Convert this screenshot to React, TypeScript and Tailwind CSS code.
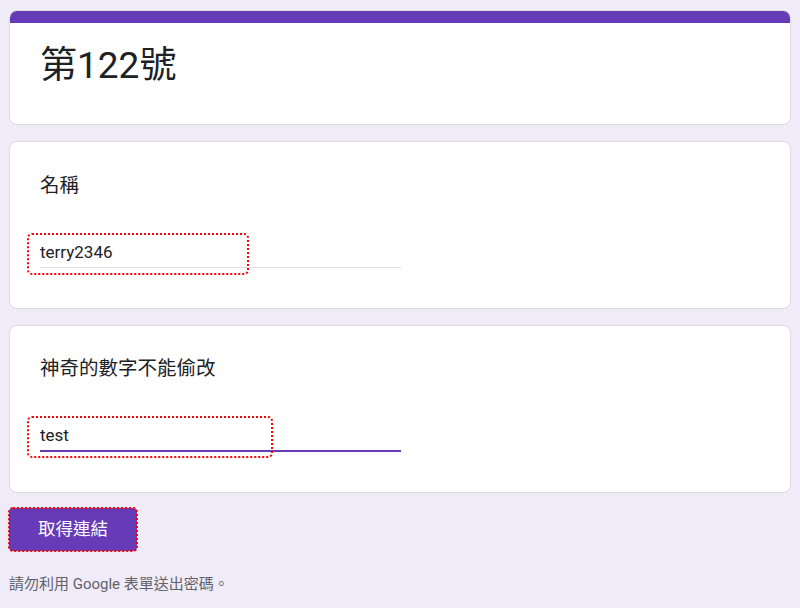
import React from "react";

const cjk = "font-['Roboto','Noto_Sans_CJK_TC',sans-serif]";

function Question({
  label,
  value,
  focused,
  ringWidth,
}: {
  label: string;
  value: string;
  focused?: boolean;
  ringWidth: number;
}) {
  return (
    <div
      className={`bg-white border border-[#dadce0] rounded-lg pl-[30px] pb-[40px] ${
        focused ? "pt-[31px]" : "pt-[32px]"
      }`}
    >
      <div className="text-[19.5px] leading-6 text-[#202124]">{label}</div>
      <div className="relative mt-[42px] w-[361px]">
        <div
          className={`text-[17px] leading-6 text-[#202124] pb-[3px] ${
            focused ? "border-b-2 border-[#673ab7]" : "border-b border-[#e0e0e0]"
          }`}
        >
          {value}
        </div>
        <div
          className="absolute -left-[13px] -top-[7px] h-[42px] border-2 border-dotted border-[#ff0000] rounded-[5px]"
          style={{ width: ringWidth }}
        />
      </div>
    </div>
  );
}

export default function App() {
  return (
    <div className={`min-h-[608px] bg-[#f0ebf8] px-[9px] pt-[10px] ${cjk}`}>
      <div className="flex flex-col gap-4">
        <div className="bg-white border border-[#dadce0] rounded-lg overflow-hidden">
          <div className="h-[12px] bg-[#673ab7]" />
          <div className="pl-[30px] pt-[19px] pb-[34px] text-[37px] leading-[48px] text-[#202124]">
            第122號
          </div>
        </div>
        <Question label="名稱" value="terry2346" ringWidth={222} />
        <Question label="神奇的數字不能偷改" value="test" focused ringWidth={246} />
      </div>
      <button className="mt-[15px] w-[128px] h-[43px] bg-[#673ab7] text-white text-[17.5px] rounded-[4px] outline-2 outline-dotted outline-[#ff0000] -outline-offset-1">
        取得連結
      </button>
      <p className="mt-[23px] text-[15px] leading-5 text-[#5f6368]">請勿利用 Google 表單送出密碼。</p>
    </div>
  );
}
